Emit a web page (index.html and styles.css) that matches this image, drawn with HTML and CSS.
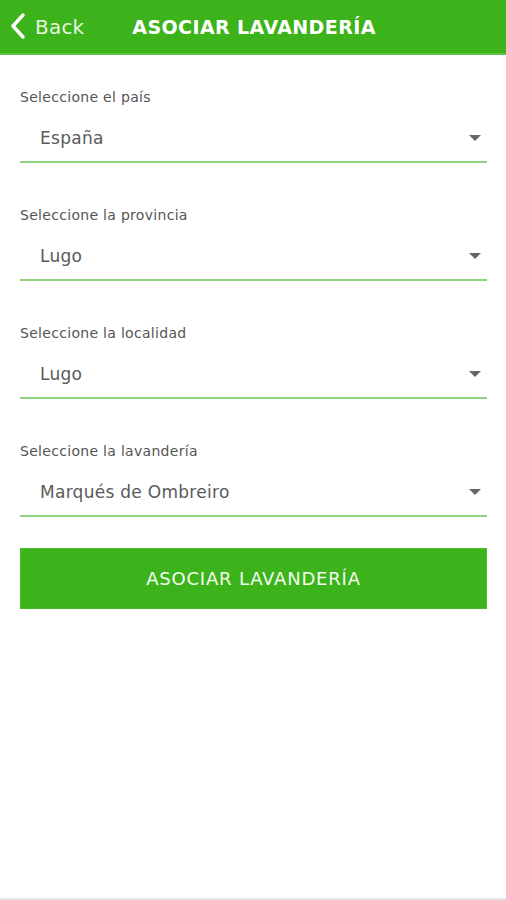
FILE: index.html
```html
<!DOCTYPE html>
<html lang="es">
<head>
<meta charset="utf-8">
<link rel="stylesheet" href="styles.css">
</head>
<body>
<header class="topbar">
  <a class="back">
    <svg class="chev" width="16" height="26" viewBox="0 0 16 26"><path d="M13 2 L3 13 L13 24" fill="none" stroke="#fff" stroke-width="3.4" stroke-linecap="round" stroke-linejoin="round"/></svg>
    <span class="back-text">Back</span>
  </a>
  <h1 class="title">ASOCIAR LAVANDERÍA</h1>
</header>
<main class="content">
  <div class="field">
    <div class="label">Seleccione el país</div>
    <div class="select"><span class="value">España</span><span class="caret"></span></div>
  </div>
  <div class="field">
    <div class="label">Seleccione la provincia</div>
    <div class="select"><span class="value">Lugo</span><span class="caret"></span></div>
  </div>
  <div class="field">
    <div class="label">Seleccione la localidad</div>
    <div class="select"><span class="value">Lugo</span><span class="caret"></span></div>
  </div>
  <div class="field">
    <div class="label">Seleccione la lavandería</div>
    <div class="select"><span class="value">Marqués de Ombreiro</span><span class="caret"></span></div>
  </div>
  <button class="submit">ASOCIAR LAVANDERÍA</button>
</main>
<div class="bottom-line"></div>
</body>
</html>
```
FILE: styles.css
```css
* { box-sizing: border-box; }
html, body { margin: 0; padding: 0; }
body {
  width: 506px;
  height: 900px;
  background: #fff;
  font-family: "DejaVu Sans", "Noto Sans", sans-serif;
  position: relative;
  overflow: hidden;
}
.topbar {
  height: 55px;
  background: #3db31b;
  border-bottom: 2px solid #62c445;
  display: flex;
  align-items: center;
  padding-left: 10px;
}
.back {
  display: flex;
  align-items: center;
  color: #e6f5df;
  text-decoration: none;
}
.chev { display: block; margin-top: -1px; }
.back-text {
  font-size: 20px;
  margin-left: 9px;
  letter-spacing: 0.2px;
}
.title {
  margin: 0 0 0 48px;
  font-size: 19px;
  font-weight: 600;
  color: #fff;
  letter-spacing: 0.4px;
}
.content {
  padding: 33px 19px 0 20px;
}
.field {
  display: flex;
  flex-direction: column;
}
.field + .field { margin-top: 43px; }
.label {
  font-size: 14px;
  color: #555;
  letter-spacing: 0.3px;
  line-height: 18px;
}
.select {
  display: flex;
  align-items: center;
  justify-content: space-between;
  height: 57px;
  border-bottom: 2px solid #8fd47c;
  padding: 8px 6px 0 20px;
}
.value {
  font-size: 17px;
  color: #5a5a5a;
  letter-spacing: 0.28px;
}
.caret {
  width: 0;
  height: 0;
  border-left: 6px solid transparent;
  border-right: 6px solid transparent;
  border-top: 6px solid #666;
}
.submit {
  display: block;
  width: 100%;
  height: 61px;
  margin-top: 31px;
  background: #3db31b;
  border: 1px solid #4cbb2d;
  color: #f2fbef;
  font-family: inherit;
  font-size: 18px;
  letter-spacing: 0.8px;
  padding: 0;
}
.bottom-line {
  position: absolute;
  left: 0;
  right: 0;
  bottom: 0;
  height: 2px;
  background: #e6e8e6;
}
```
